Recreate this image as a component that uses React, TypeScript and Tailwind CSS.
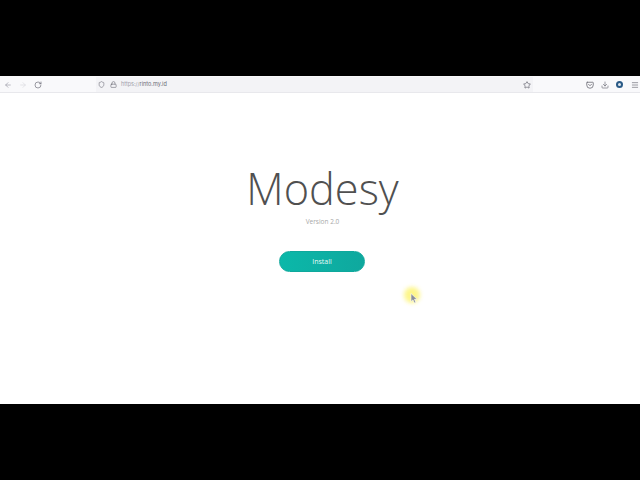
import { ArrowLeft, ArrowRight, RotateCw, Shield, Lock, Star, Download, Menu } from "lucide-react";

function Pocket() {
  return (
    <svg width="8" height="8" viewBox="0 0 16 16" fill="none" stroke="#6b6b75" strokeWidth="1.6" strokeLinecap="round" strokeLinejoin="round">
      <path d="M2.5 2.5h11a1 1 0 0 1 1 1V8a6.5 6.5 0 0 1-13 0V3.5a1 1 0 0 1 1-1z" />
      <path d="M5 6.5 8 9.5l3-3" />
    </svg>
  );
}

function Cursor() {
  return (
    <svg width="9" height="11" viewBox="0 0 9 11" className="absolute left-[7px] top-[5px]">
      <path d="M1 0.5v8l2-1.6 1.3 3 1.5-.7-1.3-2.9h2.6z" fill="#8b8f98" stroke="#ffffff" strokeWidth="0.6" />
    </svg>
  );
}

export default function App() {
  return (
    <div className="w-[640px] h-[480px] bg-black flex flex-col overflow-hidden font-['Open_Sans',sans-serif]">
      <div className="h-[76px] shrink-0" />
      <div className="h-[328px] bg-white flex flex-col relative">
        {/* browser toolbar */}
        <div className="h-[17px] shrink-0 bg-[#f9f9fb] border-b border-[#e8e8ec] flex items-center pl-[4px] pt-[1px]">
          <ArrowLeft className="w-[8px] h-[8px] text-[#9a9aa6] shrink-0" strokeWidth={2} />
          <ArrowRight className="w-[8px] h-[8px] text-[#d8d8de] ml-[7px] shrink-0" strokeWidth={2} />
          <RotateCw className="w-[8px] h-[8px] text-[#6b6b75] ml-[7px] shrink-0" strokeWidth={2} />
          <div className="w-[437px] h-[15px] ml-[54px] shrink-0 bg-[#f3f3f6] flex items-center pl-[2px] pr-[2px]">
            <Shield className="w-[7px] h-[7px] text-[#6b6b75]" strokeWidth={2} />
            <Lock className="w-[7px] h-[7px] text-[#6b6b75] ml-[5px]" strokeWidth={2} />
            <span className="ml-[4px] text-[5.5px] leading-none text-[#a0a0aa] font-['Inter',sans-serif]">
              https://<span className="text-[#6b6b75]">rinto.my.id</span>
            </span>
            <Star className="w-[8px] h-[8px] text-[#5b5b66] ml-auto" strokeWidth={2} />
          </div>
          <div className="flex items-center ml-[53px] gap-[7px] shrink-0">
            <Pocket />
            <Download className="w-[8px] h-[8px] text-[#6b6b75]" strokeWidth={2} />
            <div className="w-[7px] h-[7px] rounded-full bg-[#2a5a86] flex items-center justify-center">
              <div className="w-[3px] h-[3px] rounded-full bg-[#dfe7ef]" />
            </div>
            <Menu className="w-[8px] h-[8px] text-[#6b6b75] ml-[1px]" strokeWidth={2} />
          </div>
        </div>

        {/* page content */}
        <div className="flex flex-col items-center pt-[65px] pl-[5px]">
          <h1 className="text-[43.3px] leading-[62px] font-light text-[#505050]">Modesy</h1>
          <p className="mt-[-3px] text-[6.5px] leading-[10px] text-[#a8a8a8]">Version 2.0</p>
          <button className="mt-[24px] mr-[1px] w-[86px] h-[21px] pt-[1px] rounded-full bg-gradient-to-r from-[#0bb8a9] to-[#0fa89e] border border-[#0fa89c] text-[#e8fbf8] text-[7px] flex items-center justify-center">
            Install
          </button>
        </div>

        {/* screen recorder cursor highlight */}
        <div className="absolute left-[404px] top-[211px] w-[16px] h-[16px] rounded-full bg-[#fdf68a] blur-[2px]" />
        <div className="absolute left-[403px] top-[212px] w-[18px] h-[18px]">
          <Cursor />
        </div>
      </div>
      <div className="flex-1" />
    </div>
  );
}
